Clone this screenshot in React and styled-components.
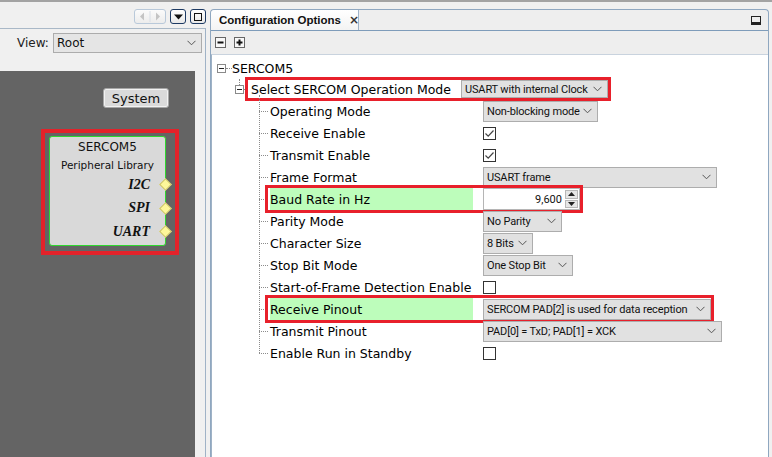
import styled, { createGlobalStyle } from "styled-components"

const Global = createGlobalStyle`
  html, body { margin: 0; padding: 0; }
  body {
    background: #f0f0f0;
    font-family: "DejaVu Sans", "Liberation Sans", sans-serif;
    overflow: hidden;
  }
`

function Chevron() {
  return (
    <svg width="9" height="6" viewBox="0 0 9 6">
      <polyline points="0.5,0.8 4.5,4.8 8.5,0.8" fill="none" stroke="#555" strokeWidth="1" />
    </svg>
  )
}

function Select({ value, width, small }) {
  return (
    <SelectBox $width={width} $small={small}>
      <span>{value}</span>
      <Chevron />
    </SelectBox>
  )
}

function Check({ checked }) {
  return (
    <CheckBox>
      {checked && (
        <svg width="11" height="11" viewBox="0 0 11 11">
          <polyline points="1.5,5.5 4.2,8.2 9.5,2.5" fill="none" stroke="#444" strokeWidth="1.2" />
        </svg>
      )}
    </CheckBox>
  )
}

function Spinner({ value }) {
  return (
    <SpinBox>
      <SpinValue>{value}</SpinValue>
      <SpinButtons>
        <SpinBtn>
          <svg width="7" height="4" viewBox="0 0 7 4"><polygon points="0,4 3.5,0 7,4" fill="#222" /></svg>
        </SpinBtn>
        <SpinBtn>
          <svg width="7" height="4" viewBox="0 0 7 4"><polygon points="0,0 3.5,4 7,0" fill="#222" /></svg>
        </SpinBtn>
      </SpinButtons>
    </SpinBox>
  )
}

function Expander() {
  return (
    <ExpBox>
      <svg width="7" height="7" viewBox="0 0 7 7"><line x1="1" y1="3.5" x2="6" y2="3.5" stroke="#222" strokeWidth="1" /></svg>
    </ExpBox>
  )
}

const options = [
  { label: "Operating Mode", control: <Select value="Non-blocking mode" width={115} /> },
  { label: "Receive Enable", control: <Check checked /> },
  { label: "Transmit Enable", control: <Check checked /> },
  { label: "Frame Format", control: <Select value="USART frame" width={234} /> },
  { label: "Baud Rate in Hz", control: <Spinner value="9,600" />, marked: true },
  { label: "Parity Mode", control: <Select value="No Parity" width={79} /> },
  { label: "Character Size", control: <Select value="8 Bits" width={50} /> },
  { label: "Stop Bit Mode", control: <Select value="One Stop Bit" width={90} /> },
  { label: "Start-of-Frame Detection Enable", control: <Check /> },
  { label: "Receive Pinout", control: <Select value="SERCOM PAD[2] is used for data reception" width={228} />, marked: true },
  { label: "Transmit Pinout", control: <Select value="PAD[0] = TxD; PAD[1] = XCK" width={239} /> },
  { label: "Enable Run in Standby", control: <Check /> },
]

const ports = ["I2C", "SPI", "UART"]

export default function App() {
  return (
    <>
      <Global />
      <Screen>
        <LeftPanel>
          <LeftHeader>
            <NavBox>
              <svg width="30" height="13" viewBox="0 0 30 13">
                <polygon points="9,2.5 9,10.5 5,6.5" fill="#c4c4c4" />
                <line x1="15" y1="1" x2="15" y2="12" stroke="#d8dee6" />
                <polygon points="21,2.5 21,10.5 25,6.5" fill="#c4c4c4" />
              </svg>
            </NavBox>
            <TitleBtn>
              <svg width="9" height="6" viewBox="0 0 9 6"><polygon points="0,0.5 9,0.5 4.5,5.5" fill="#111" /></svg>
            </TitleBtn>
            <TitleBtn>
              <MaxSquare />
            </TitleBtn>
          </LeftHeader>
          <LeftBody>
            <ViewRow>
              <ViewLabel>View:</ViewLabel>
              <ViewSelect>
                <span>Root</span>
                <Chevron />
              </ViewSelect>
            </ViewRow>
            <Canvas>
              <SystemButton>System</SystemButton>
              <NodeFrame>
                <Node>
                  <NodeTitle>SERCOM5</NodeTitle>
                  <NodeSub>Peripheral Library</NodeSub>
                  {ports.map((p) => (
                    <Port key={p}>
                      {p}
                      <Diamond />
                    </Port>
                  ))}
                </Node>
              </NodeFrame>
            </Canvas>
          </LeftBody>
        </LeftPanel>

        <RightPanel>
          <TabBar>
            <Tab>
              <TabTitle>Configuration Options</TabTitle>
              <TabClose>×</TabClose>
            </Tab>
            <TabSpacer />
            <MinIcon />
          </TabBar>
          <Toolbar>
            <ToolBtn>
              <svg width="9" height="9" viewBox="0 0 9 9"><rect x="1.5" y="3.5" width="6" height="2" fill="#111" /></svg>
            </ToolBtn>
            <ToolBtn>
              <svg width="9" height="9" viewBox="0 0 9 9">
                <rect x="1.5" y="3.5" width="6" height="2" fill="#111" />
                <rect x="3.5" y="1.5" width="2" height="6" fill="#111" />
              </svg>
            </ToolBtn>
          </Toolbar>
          <Content>
            <RootRow>
              <Expander />
              <HDots $w={6} />
              <span>SERCOM5</span>
            </RootRow>
            <ModeRow>
              <Expander />
              <HDots $w={4} />
              <Marked $pad={3}>
                <ModeLabel>Select SERCOM Operation Mode</ModeLabel>
                <Select value="USART with internal Clock" width={147} small />
              </Marked>
            </ModeRow>
            <ChildList>
              {options.map((o) => (
                <OptionRow key={o.label}>
                  <HDots $w={9} />
                  <Cell $marked={o.marked}>
                    <OptionLabel $marked={o.marked}>{o.label}</OptionLabel>
                    {o.control}
                  </Cell>
                </OptionRow>
              ))}
            </ChildList>
          </Content>
        </RightPanel>
      </Screen>
    </>
  )
}

const Screen = styled.div`
  display: flex;
  height: 457px;
  box-sizing: border-box;
  border-top: 2px solid #a3a3a3;
`

const LeftPanel = styled.div`
  width: 206px;
  display: flex;
  flex-direction: column;
`

const LeftHeader = styled.div`
  height: 26px;
  box-sizing: border-box;
  padding-top: 7px;
  display: flex;
  justify-content: flex-end;
  align-items: flex-start;
  gap: 4px;
`

const NavBox = styled.div`
  width: 32px;
  height: 15px;
  box-sizing: border-box;
  border: 1px solid #b9c9da;
  border-radius: 3px;
  background: linear-gradient(#fbfbfb, #ececec);
  display: flex;
  align-items: center;
  justify-content: center;
`

const TitleBtn = styled.div`
  width: 16px;
  height: 15px;
  box-sizing: border-box;
  border: 1px solid #1d3a63;
  border-radius: 3px;
  background: linear-gradient(#ffffff, #e8e8e8);
  display: flex;
  align-items: center;
  justify-content: center;
`

const MaxSquare = styled.div`
  width: 8px;
  height: 8px;
  border: 1.5px solid #111;
  box-sizing: border-box;
`

const LeftBody = styled.div`
  flex: 1;
  display: flex;
  flex-direction: column;
  border-top: 1px solid #a9b8c7;
  border-right: 1px solid #9fb2c6;
`

const ViewRow = styled.div`
  height: 42px;
  display: flex;
  align-items: flex-start;
  padding-top: 4px;
  box-sizing: border-box;
`

const ViewLabel = styled.div`
  width: 53px;
  box-sizing: border-box;
  padding-left: 17px;
  line-height: 20px;
  font-size: 12px;
  color: #222;
`

const ViewSelect = styled.div`
  width: 149px;
  height: 20px;
  box-sizing: border-box;
  border: 1px solid #acacac;
  background: #e5e5e5;
  display: flex;
  align-items: center;
  justify-content: space-between;
  padding: 0 5px 0 3px;
  font-size: 12px;
  color: #111;
`

const Canvas = styled.div`
  flex: 1;
  margin-right: 10px;
  background: #646464;
  position: relative;
`

const SystemButton = styled.div`
  position: absolute;
  left: 103px;
  top: 17px;
  width: 66px;
  height: 20px;
  box-sizing: border-box;
  border: 1px solid #a6a6a6;
  box-shadow: inset 0 0 0 1px #f2f2f2;
  border-radius: 3px;
  background: #dadada;
  font-size: 13px;
  color: #111;
  display: flex;
  align-items: center;
  justify-content: center;
`

const NodeFrame = styled.div`
  position: absolute;
  left: 41px;
  top: 58px;
  width: 138px;
  height: 126px;
  box-sizing: border-box;
  border: 4px solid #e3222a;
  padding: 3px 0 0 4px;
`

const Node = styled.div`
  width: 117px;
  height: 110px;
  box-sizing: border-box;
  border: 1px solid #2fd82f;
  border-radius: 3px;
  background: #d9d9d9;
  position: relative;
  display: flex;
  flex-direction: column;
  align-items: center;
`

const NodeTitle = styled.div`
  margin-top: 2px;
  font-size: 12px;
  line-height: 16px;
  color: #111;
`

const NodeSub = styled.div`
  margin-top: 3px;
  margin-bottom: 1px;
  font-size: 10.5px;
  line-height: 14px;
  color: #111;
`

const Port = styled.div`
  align-self: stretch;
  height: 23.5px;
  padding-right: 15px;
  display: flex;
  align-items: center;
  justify-content: flex-end;
  position: relative;
  font-family: "Liberation Serif", serif;
  font-weight: bold;
  font-style: italic;
  font-size: 14px;
  color: #111;
`

const Diamond = styled.div`
  position: absolute;
  right: -5px;
  top: 7px;
  width: 7px;
  height: 7px;
  background: #fdf79a;
  border: 1px solid #c9c06a;
  transform: rotate(45deg);
`

const RightPanel = styled.div`
  margin: 7px 3px 0 4px;
  flex: 1;
  display: flex;
  flex-direction: column;
  border: 1px solid #8fa7c0;
  border-bottom: none;
  border-radius: 4px 4px 0 0;
  background: #eeeeee;
`

const TabBar = styled.div`
  height: 20px;
  display: flex;
  align-items: stretch;
  border-bottom: 1px solid #7e9cba;
`

const Tab = styled.div`
  width: 148px;
  flex-shrink: 0;
  box-sizing: border-box;
  border-right: 1px solid #9fb3c8;
  border-radius: 4px 0 0 0;
  background: linear-gradient(#ffffff, #f3f3f3);
  display: flex;
  align-items: center;
  padding-left: 8px;
  gap: 8px;
  white-space: nowrap;
`

const TabTitle = styled.span`
  font-family: "Liberation Sans", sans-serif;
  font-weight: bold;
  font-size: 11.5px;
  color: #111;
`

const TabClose = styled.span`
  font-size: 12px;
  font-weight: bold;
  color: #333;
`

const TabSpacer = styled.div`
  flex: 1;
`

const MinIcon = styled.div`
  width: 10px;
  height: 9px;
  margin: 6px 7px 0 0;
  box-sizing: border-box;
  border: 1px solid #222;
  border-bottom-width: 3px;
`

const Toolbar = styled.div`
  height: 23px;
  display: flex;
  align-items: flex-start;
  gap: 8px;
  padding: 6px 0 0 4px;
  box-sizing: border-box;
`

const ToolBtn = styled.div`
  width: 11px;
  height: 11px;
  box-sizing: border-box;
  border: 1px solid #666;
  background: #f8f8f8;
  display: flex;
  align-items: center;
  justify-content: center;
`

const Content = styled.div`
  flex: 1;
  background: #ffffff;
  border-top: 1px solid #c9d3de;
  border-left: 1px solid #9fb2c6;
  padding-top: 3px;
  font-size: 12px;
  color: #000;
`

const RootRow = styled.div`
  height: 20px;
  display: flex;
  align-items: center;
  padding-left: 5px;
  font-size: 12.5px;
`

const ExpBox = styled.div`
  width: 9px;
  height: 9px;
  box-sizing: border-box;
  border: 1px solid #8a8a8a;
  background: #fff;
  display: flex;
  align-items: center;
  justify-content: center;
  position: relative;
`

const HDots = styled.span`
  width: ${(p) => p.$w}px;
  border-top: 1px dotted #8c8c8c;
  flex-shrink: 0;
`

const ModeRow = styled.div`
  height: 22px;
  display: flex;
  align-items: center;
  padding-left: 23px;
  position: relative;

  &::before {
    content: "";
    position: absolute;
    left: 27px;
    top: 1px;
    height: 6px;
    border-left: 1px dotted #8c8c8c;
  }
`

const Marked = styled.div`
  display: flex;
  align-items: center;
  height: 18px;
  padding-left: ${(p) => p.$pad}px;
  outline: 3px solid #e8202b;
`

const ModeLabel = styled.div`
  width: 200px;
  margin-right: 10px;
  font-size: 12.5px;
  white-space: nowrap;
`

const ChildList = styled.div`
  margin-left: 47px;
  position: relative;

  &::before {
    content: "";
    position: absolute;
    left: 0;
    top: -5px;
    bottom: 11px;
    border-left: 1px dotted #8c8c8c;
  }
`

const OptionRow = styled.div`
  height: 22px;
  display: flex;
  align-items: center;
`

const Cell = styled.div`
  display: flex;
  align-items: center;
  height: ${(p) => (p.$marked ? "22px" : "auto")};
  padding-left: 2px;
  outline: ${(p) => (p.$marked ? "3px solid #e8202b" : "none")};
`

const OptionLabel = styled.div`
  width: 203px;
  height: 22px;
  margin-right: 10px;
  display: flex;
  align-items: center;
  font-size: 12.5px;
  white-space: nowrap;
  background: ${(p) => (p.$marked ? "#bdfdbb" : "transparent")};
`

const SelectBox = styled.div`
  width: ${(p) => p.$width}px;
  height: ${(p) => (p.$small ? 18 : 21)}px;
  box-sizing: border-box;
  border: 1px solid #adadad;
  background: #e1e1e1;
  display: flex;
  align-items: center;
  justify-content: space-between;
  padding: 0 5px 0 3px;
  font-family: Roboto, "Liberation Sans", sans-serif;
  font-size: 11px;
  letter-spacing: -0.15px;
  color: #111;
  white-space: nowrap;
`

const CheckBox = styled.div`
  width: 13px;
  height: 13px;
  box-sizing: border-box;
  border: 1px solid #333;
  background: #fff;
  display: flex;
  align-items: center;
  justify-content: center;
`

const SpinBox = styled.div`
  width: 97px;
  height: 22px;
  box-sizing: border-box;
  border: 1px solid #b5b5b5;
  background: #fff;
  display: flex;
  align-items: center;
`

const SpinValue = styled.div`
  flex: 1;
  text-align: right;
  padding-right: 3px;
  font-family: Roboto, "Liberation Sans", sans-serif;
  font-size: 11px;
  color: #111;
`

const SpinButtons = styled.div`
  width: 13px;
  height: 18px;
  margin-right: 1px;
  display: flex;
  flex-direction: column;
  gap: 1px;
`

const SpinBtn = styled.div`
  flex: 1;
  background: #e6e6e6;
  border: 1px solid #b8b8b8;
  display: flex;
  align-items: center;
  justify-content: center;
`
